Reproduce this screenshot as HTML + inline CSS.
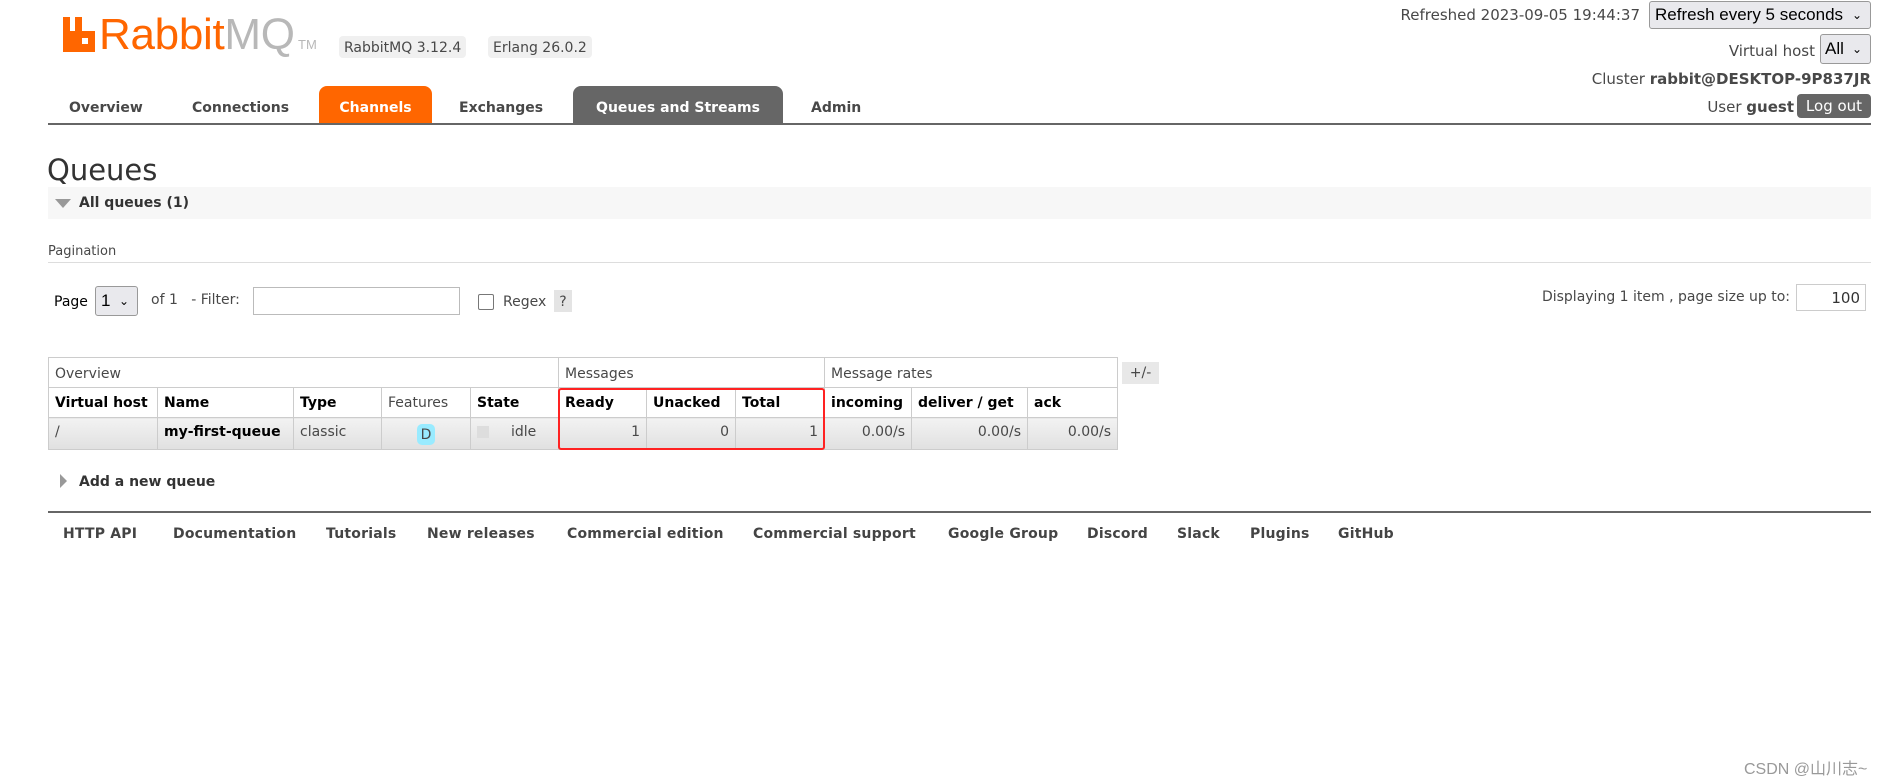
<!DOCTYPE html>
<html><head><meta charset="utf-8"><style>
*{box-sizing:border-box;margin:0;padding:0}
body{width:1893px;height:781px;background:#fff;font-family:"DejaVu Sans","Liberation Sans",sans-serif;color:#484848;font-size:13px;position:relative;overflow:hidden}
.a{position:absolute;white-space:nowrap}
.b{font-weight:bold}
.tab{position:absolute;top:86px;height:38px;line-height:44px;font-weight:bold;font-size:14px;color:#484848}
.sel{border:1px solid #999;background:#e9e9ed;border-radius:3px;color:#000;font-family:"Liberation Sans",sans-serif}
table{border-collapse:collapse;position:absolute;left:48px;top:357px;table-layout:fixed;width:1069px}
td{border:1px solid #ccc;height:30px;padding:0 6px;font-size:14px;white-space:nowrap;overflow:hidden}
tr.h1 td{height:30px;color:#484848;padding-top:2px}
tr.h2 td{font-weight:bold;color:#000;height:30px}
tr.r td{background:linear-gradient(#f2f2f2,#e0e0e0);height:32px;color:#484848;padding-bottom:4px}
.n{text-align:right}
.f{top:526px;font-size:14px;color:#444;font-weight:bold;letter-spacing:0.2px}
</style></head><body>
<svg class="a" style="left:63px;top:17px" width="32" height="35" viewBox="0 0 32 35"><path d="M0 0h7v14h5V0h7v14h13v21H0z" fill="#f60"/><rect x="19" y="21" width="6" height="6" fill="#fff"/></svg>
<div class="a" style="left:99px;top:10px;font-family:'Liberation Sans',sans-serif;font-size:44px;color:#f60;letter-spacing:-0.3px">Rabbit<span style="color:#b8b8b8">MQ</span><span style="color:#b8b8b8;font-size:13px;letter-spacing:0"> TM</span></div>
<div class="a" style="left:339px;top:36px;height:22px;line-height:24px;padding:0 5px;background:#f0f0f0;border-radius:4px;font-size:14px">RabbitMQ 3.12.4</div>
<div class="a" style="left:488px;top:36px;height:22px;line-height:24px;padding:0 5px;background:#f0f0f0;border-radius:4px;font-size:14px">Erlang 26.0.2</div>
<div class="tab" style="left:69px">Overview</div>
<div class="tab" style="left:192px">Connections</div>
<div class="tab" style="left:319px;width:113px;background:#f60;color:#fff;text-align:center;border-radius:8px 8px 0 0">Channels</div>
<div class="tab" style="left:459px">Exchanges</div>
<div class="tab" style="left:573px;width:210px;background:#666;color:#fff;text-align:center;border-radius:8px 8px 0 0">Queues and Streams</div>
<div class="tab" style="left:811px">Admin</div>
<div class="a" style="left:48px;top:123px;width:1823px;height:2px;background:#666"></div>
<div class="a" style="right:253px;top:6px;font-size:15px">Refreshed 2023-09-05 19:44:37</div>
<div class="a sel" style="left:1649px;top:1px;width:222px;height:28px;line-height:26px;padding-left:5px;font-size:17px">Refresh every 5 seconds<span style="position:absolute;right:8px;font-size:12px">&#8964;</span></div>
<div class="a" style="right:78px;top:42px;font-size:15px">Virtual host</div>
<div class="a sel" style="left:1820px;top:34px;width:51px;height:30px;line-height:28px;padding-left:4px;font-size:17px">All<span style="position:absolute;right:8px;font-size:12px">&#8964;</span></div>
<div class="a" style="right:22px;top:70px;font-size:15px">Cluster <b>rabbit@DESKTOP-9P837JR</b></div>
<div class="a" style="right:99px;top:98px;font-size:15px">User <b>guest</b></div>
<div class="a" style="left:1797px;top:94px;width:74px;height:24px;line-height:24px;background:#666;color:#fff;border-radius:4px;text-align:center;font-size:15px">Log out</div>
<div class="a" style="left:47px;top:153px;font-size:29px;color:#333">Queues</div>
<div class="a" style="left:48px;top:187px;width:1823px;height:32px;background:#f7f7f7"></div>
<div class="a" style="left:55px;top:199px;width:0;height:0;border-left:8px solid transparent;border-right:8px solid transparent;border-top:9px solid #999"></div>
<div class="a b" style="left:79px;top:195px;font-size:14px;color:#333">All queues (1)</div>
<div class="a" style="left:48px;top:244px;font-size:13px">Pagination</div>
<div class="a" style="left:48px;top:262px;width:1823px;height:1px;background:#ddd"></div>
<div class="a" style="left:54px;top:294px;font-size:14px;color:#000">Page</div>
<div class="a sel" style="left:95px;top:286px;width:43px;height:30px;line-height:28px;padding-left:5px;font-size:17px">1<span style="position:absolute;right:8px;font-size:12px">&#8964;</span></div>
<div class="a" style="left:151px;top:292px;font-size:14px">of 1 &nbsp; - Filter:</div>
<div class="a" style="left:253px;top:287px;width:207px;height:28px;border:1px solid #bbb"></div>
<div class="a" style="left:478px;top:294px;width:16px;height:16px;border:1.5px solid #777;border-radius:2px"></div>
<div class="a" style="left:503px;top:294px;font-size:14px">Regex</div>
<div class="a" style="left:554px;top:290px;width:18px;height:22px;background:#e4e4e4;text-align:center;line-height:24px;font-size:14px">?</div>
<div class="a" style="right:103px;top:289px;font-size:14px">Displaying 1 item , page size up to:</div>
<div class="a" style="left:1796px;top:284px;width:70px;height:27px;border:1px solid #ccc;text-align:right;padding-right:5px;line-height:27px;font-size:15px;color:#333">100</div>
<table>
<colgroup><col style="width:109px"><col style="width:136px"><col style="width:88px"><col style="width:89px"><col style="width:88px"><col style="width:88px"><col style="width:89px"><col style="width:89px"><col style="width:87px"><col style="width:116px"><col style="width:90px"></colgroup>
<tr class="h1"><td colspan="5">Overview</td><td colspan="3">Messages</td><td colspan="3">Message rates</td></tr>
<tr class="h2"><td>Virtual host</td><td>Name</td><td>Type</td><td style="font-weight:normal;color:#484848">Features</td><td>State</td><td>Ready</td><td>Unacked</td><td>Total</td><td>incoming</td><td>deliver / get</td><td>ack</td></tr>
<tr class="r"><td>/</td><td class="b" style="color:#000">my-first-queue</td><td>classic</td><td style="text-align:center"><span style="display:inline-block;background:#99ebff;border-radius:5px;padding:3px 4px 2px;font-size:14px;margin-top:6px">D</span></td><td><span style="display:inline-block;width:12px;height:12px;background:#ddd;vertical-align:middle"></span><span style="margin-left:22px">idle</span></td><td class="n">1</td><td class="n">0</td><td class="n">1</td><td class="n">0.00/s</td><td class="n">0.00/s</td><td class="n">0.00/s</td></tr>
</table>
<div class="a" style="left:558px;top:388px;width:267px;height:62px;border:2.5px solid #f22;border-radius:3px"></div>
<div class="a" style="left:1122px;top:362px;width:37px;height:22px;background:#e8e8e8;text-align:center;line-height:22px;font-size:14px">+/-</div>
<div class="a" style="left:60px;top:474px;width:0;height:0;border-top:7px solid transparent;border-bottom:7px solid transparent;border-left:7px solid #999"></div>
<div class="a b" style="left:79px;top:474px;font-size:14px;color:#333">Add a new queue</div>
<div class="a" style="left:48px;top:511px;width:1823px;height:2px;background:#666"></div>
<div class="a f" style="left:63px">HTTP API</div>
<div class="a f" style="left:173px">Documentation</div>
<div class="a f" style="left:326px">Tutorials</div>
<div class="a f" style="left:427px">New releases</div>
<div class="a f" style="left:567px">Commercial edition</div>
<div class="a f" style="left:753px">Commercial support</div>
<div class="a f" style="left:948px">Google Group</div>
<div class="a f" style="left:1087px">Discord</div>
<div class="a f" style="left:1177px">Slack</div>
<div class="a f" style="left:1250px">Plugins</div>
<div class="a f" style="left:1338px">GitHub</div>
<div class="a" style="left:1744px;top:755px;font-family:'Liberation Sans','Noto Sans CJK SC',sans-serif;font-size:16px;color:#999">CSDN @山川志~</div>
</body></html>
